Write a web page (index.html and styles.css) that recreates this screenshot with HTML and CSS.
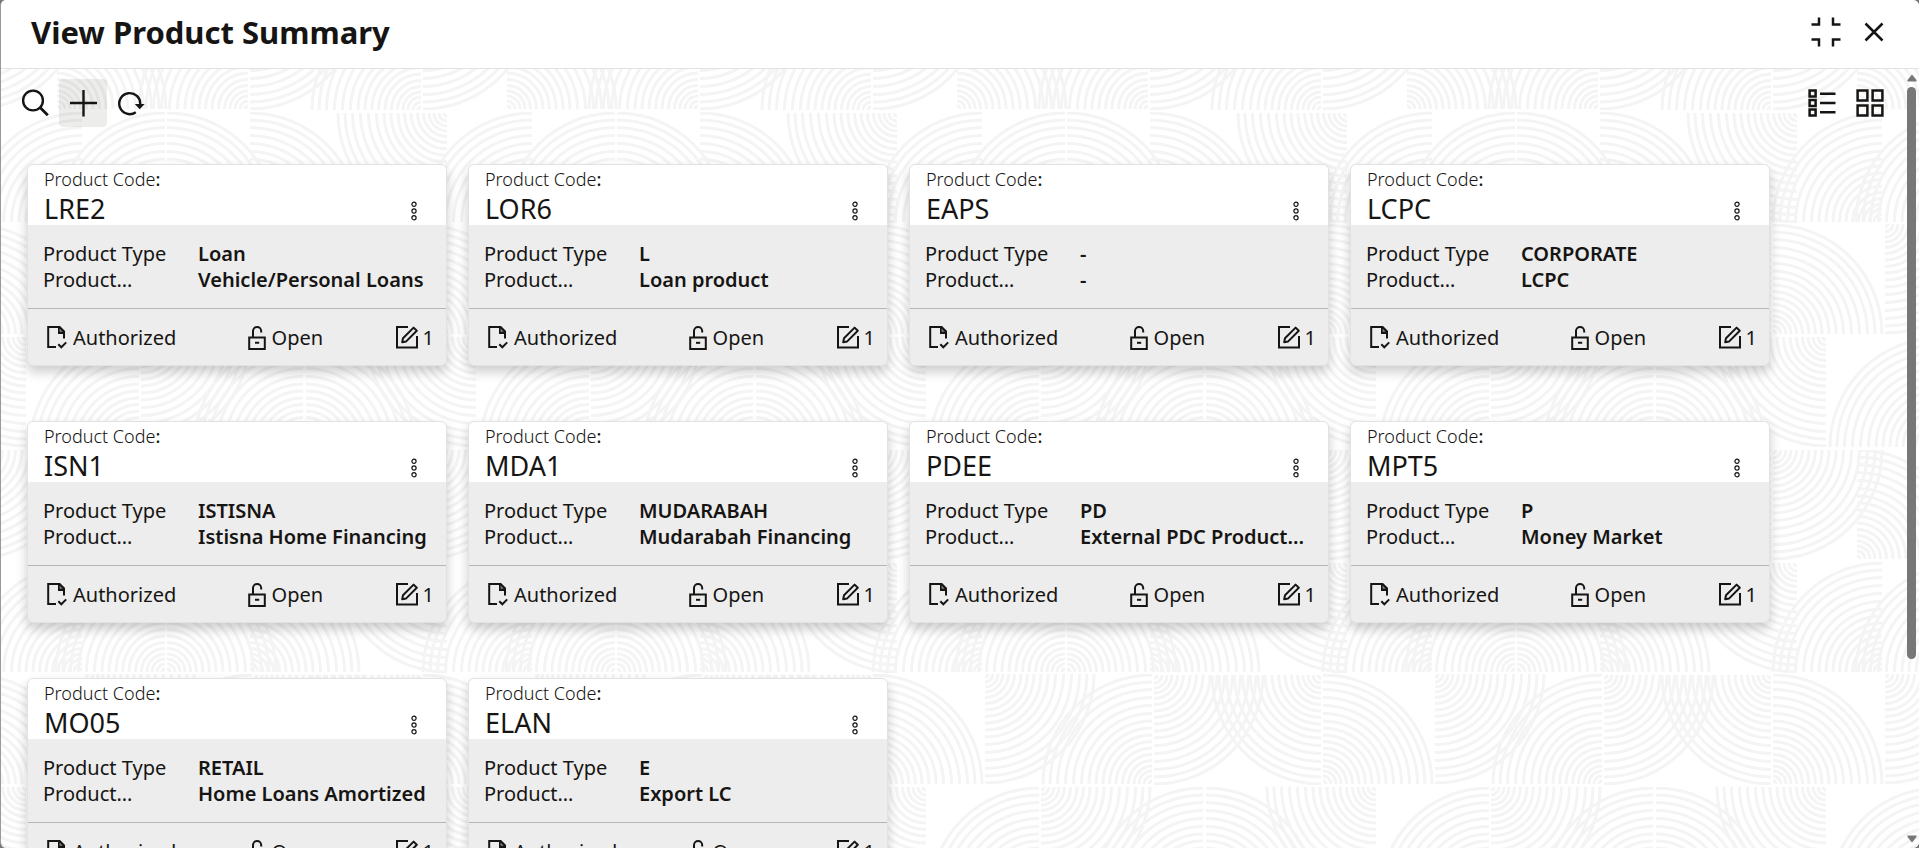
FILE: index.html
```html
<!DOCTYPE html>
<html lang="en">

<head>
<meta charset="utf-8">
<meta name="viewport" content="width=device-width, initial-scale=1">
<title>View Product Summary</title>
<link rel="stylesheet" href="styles.css">
</head>

<body>

<!-- Shared icons -->
<svg class="sprite" aria-hidden="true">
	<symbol id="i-dots" viewBox="0 0 8 20">
		<g fill="none" stroke="currentColor" stroke-width="1.2"><circle cx="4" cy="3.3" r="2.1"/><circle cx="4" cy="10" r="2.1"/><circle cx="4" cy="16.7" r="2.1"/></g>
	</symbol>
	<symbol id="i-auth" viewBox="0 0 20 24">
		<path d="M9 22H1.2V2H12l5 5v6.5" fill="none" stroke="currentColor" stroke-width="2"/>
		<path d="M11 1h2l5 5v3h-7z" fill="currentColor"/>
		<path d="M12.6 6.8V3.6l3 3.2z" fill="#888"/>
		<path d="M11.3 19.3l3 3L19.2 17.4" fill="none" stroke="currentColor" stroke-width="2"/>
	</symbol>
	<symbol id="i-open" viewBox="0 0 18 25">
		<path d="M1.2 12.5h15.6V24H1.2zM5 12.5V6a4.1 4.1 0 0 1 8.2 0v1.5" fill="none" stroke="currentColor" stroke-width="2"/>
		<path d="M7 17.8h4.2" stroke="currentColor" stroke-width="2"/>
	</symbol>
	<symbol id="i-edit" viewBox="0 0 24 24">
		<path d="M13 2H2v20.500h20V11" fill="none" stroke="currentColor" stroke-width="2"/>
		<path d="M7.200 17.200l.8-4L18.600 2.600l3.200 3.200L11.200 16.400z" fill="none" stroke="currentColor" stroke-width="2" stroke-linejoin="round"/>
	</symbol>
</svg>

<div class="window">

	<header class="titlebar">
		<h1>View Product Summary</h1>
		<div class="tools">
			<button type="button" class="tool" aria-label="Collapse">
				<svg width="30" height="30" viewBox="0 0 30 30"><path d="M0.500 7.500H8V0.500M29.500 7.500H22V0.500M0.500 22.500H8V29.500M29.500 22.500H22V29.500" fill="none" stroke="currentColor" stroke-width="2.500"/></svg>
			</button>
			<button type="button" class="tool" aria-label="Close">
				<svg width="20" height="20" viewBox="0 0 20 20"><path d="M1.500 1.500l17 17M18.500 1.500l-17 17" stroke="currentColor" stroke-width="2.500"/></svg>
			</button>
		</div>
	</header>

	<div class="body">
		<main class="content">

			<div class="toolbar">
				<div class="tools">
					<button type="button" class="tool" aria-label="Search">
						<svg width="28" height="28" viewBox="0 0 28 28"><g fill="none" stroke="currentColor" stroke-width="2.400"><circle cx="12" cy="11.500" r="9.900"/><path d="M18.800 18.300l8 8" stroke-width="2.800"/></g></svg>
					</button>
					<button type="button" class="tool active" aria-label="Add">
						<svg width="28" height="28" viewBox="0 0 28 28"><path d="M14.500 1v26.500M1 14h27" stroke="currentColor" stroke-width="2.400"/></svg>
					</button>
					<button type="button" class="tool" aria-label="Refresh">
						<svg width="28" height="28" viewBox="0 0 28 28"><path d="M18.800 23.200A10.500 10.500 0 1 1 23.200 15.500" fill="none" stroke="currentColor" stroke-width="2.400"/><path d="M17.800 15h9.800l-4.900 5.200z" fill="currentColor"/></svg>
					</button>
				</div>
				<div class="tools">
					<button type="button" class="tool" aria-label="List view">
						<svg width="28" height="28" viewBox="0 0 28 28"><path d="M1.600 1.600h6v6h-6zM1.600 11h6v6h-6zM1.600 20.400h6v6h-6z" fill="none" stroke="currentColor" stroke-width="2.500"/><path d="M12 4.800h15.500M12 14h15.500M12 23.300h15.500" stroke="currentColor" stroke-width="2.500"/></svg>
					</button>
					<button type="button" class="tool" aria-label="Tile view">
						<svg width="28" height="28" viewBox="0 0 28 28"><path d="M1.600 1.600h9.800v9.800H1.600zM16.600 1.600h9.800v9.800h-9.800zM1.600 16.600h9.800v9.800H1.600zM16.600 16.600h9.800v9.800h-9.800z" fill="none" stroke="currentColor" stroke-width="2.500"/></svg>
					</button>
				</div>
			</div>

			<div class="cards">

				<article class="card">
					<div class="card-head">
						<p class="label">Product Code<b>:</b></p>
						<h2>LRE2</h2>
						<button type="button" class="more" aria-label="More options"><svg width="8" height="20"><use href="#i-dots"/></svg></button>
					</div>
					<dl class="card-body">
						<dt>Product Type</dt><dd>Loan</dd>
						<dt>Product…</dt><dd>Vehicle/Personal Loans</dd>
					</dl>
					<div class="card-foot">
						<span><svg width="20" height="24"><use href="#i-auth"/></svg>Authorized</span>
						<span><svg width="18" height="25"><use href="#i-open"/></svg>Open</span>
						<span class="edits"><svg width="24" height="24"><use href="#i-edit"/></svg>1</span>
					</div>
				</article>

				<article class="card">
					<div class="card-head">
						<p class="label">Product Code<b>:</b></p>
						<h2>LOR6</h2>
						<button type="button" class="more" aria-label="More options"><svg width="8" height="20"><use href="#i-dots"/></svg></button>
					</div>
					<dl class="card-body">
						<dt>Product Type</dt><dd>L</dd>
						<dt>Product…</dt><dd>Loan product</dd>
					</dl>
					<div class="card-foot">
						<span><svg width="20" height="24"><use href="#i-auth"/></svg>Authorized</span>
						<span><svg width="18" height="25"><use href="#i-open"/></svg>Open</span>
						<span class="edits"><svg width="24" height="24"><use href="#i-edit"/></svg>1</span>
					</div>
				</article>

				<article class="card">
					<div class="card-head">
						<p class="label">Product Code<b>:</b></p>
						<h2>EAPS</h2>
						<button type="button" class="more" aria-label="More options"><svg width="8" height="20"><use href="#i-dots"/></svg></button>
					</div>
					<dl class="card-body">
						<dt>Product Type</dt><dd>-</dd>
						<dt>Product…</dt><dd>-</dd>
					</dl>
					<div class="card-foot">
						<span><svg width="20" height="24"><use href="#i-auth"/></svg>Authorized</span>
						<span><svg width="18" height="25"><use href="#i-open"/></svg>Open</span>
						<span class="edits"><svg width="24" height="24"><use href="#i-edit"/></svg>1</span>
					</div>
				</article>

				<article class="card">
					<div class="card-head">
						<p class="label">Product Code<b>:</b></p>
						<h2>LCPC</h2>
						<button type="button" class="more" aria-label="More options"><svg width="8" height="20"><use href="#i-dots"/></svg></button>
					</div>
					<dl class="card-body">
						<dt>Product Type</dt><dd>CORPORATE</dd>
						<dt>Product…</dt><dd>LCPC</dd>
					</dl>
					<div class="card-foot">
						<span><svg width="20" height="24"><use href="#i-auth"/></svg>Authorized</span>
						<span><svg width="18" height="25"><use href="#i-open"/></svg>Open</span>
						<span class="edits"><svg width="24" height="24"><use href="#i-edit"/></svg>1</span>
					</div>
				</article>

				<article class="card">
					<div class="card-head">
						<p class="label">Product Code<b>:</b></p>
						<h2>ISN1</h2>
						<button type="button" class="more" aria-label="More options"><svg width="8" height="20"><use href="#i-dots"/></svg></button>
					</div>
					<dl class="card-body">
						<dt>Product Type</dt><dd>ISTISNA</dd>
						<dt>Product…</dt><dd>Istisna Home Financing</dd>
					</dl>
					<div class="card-foot">
						<span><svg width="20" height="24"><use href="#i-auth"/></svg>Authorized</span>
						<span><svg width="18" height="25"><use href="#i-open"/></svg>Open</span>
						<span class="edits"><svg width="24" height="24"><use href="#i-edit"/></svg>1</span>
					</div>
				</article>

				<article class="card">
					<div class="card-head">
						<p class="label">Product Code<b>:</b></p>
						<h2>MDA1</h2>
						<button type="button" class="more" aria-label="More options"><svg width="8" height="20"><use href="#i-dots"/></svg></button>
					</div>
					<dl class="card-body">
						<dt>Product Type</dt><dd>MUDARABAH</dd>
						<dt>Product…</dt><dd>Mudarabah Financing</dd>
					</dl>
					<div class="card-foot">
						<span><svg width="20" height="24"><use href="#i-auth"/></svg>Authorized</span>
						<span><svg width="18" height="25"><use href="#i-open"/></svg>Open</span>
						<span class="edits"><svg width="24" height="24"><use href="#i-edit"/></svg>1</span>
					</div>
				</article>

				<article class="card">
					<div class="card-head">
						<p class="label">Product Code<b>:</b></p>
						<h2>PDEE</h2>
						<button type="button" class="more" aria-label="More options"><svg width="8" height="20"><use href="#i-dots"/></svg></button>
					</div>
					<dl class="card-body">
						<dt>Product Type</dt><dd>PD</dd>
						<dt>Product…</dt><dd>External PDC Product…</dd>
					</dl>
					<div class="card-foot">
						<span><svg width="20" height="24"><use href="#i-auth"/></svg>Authorized</span>
						<span><svg width="18" height="25"><use href="#i-open"/></svg>Open</span>
						<span class="edits"><svg width="24" height="24"><use href="#i-edit"/></svg>1</span>
					</div>
				</article>

				<article class="card">
					<div class="card-head">
						<p class="label">Product Code<b>:</b></p>
						<h2>MPT5</h2>
						<button type="button" class="more" aria-label="More options"><svg width="8" height="20"><use href="#i-dots"/></svg></button>
					</div>
					<dl class="card-body">
						<dt>Product Type</dt><dd>P</dd>
						<dt>Product…</dt><dd>Money Market</dd>
					</dl>
					<div class="card-foot">
						<span><svg width="20" height="24"><use href="#i-auth"/></svg>Authorized</span>
						<span><svg width="18" height="25"><use href="#i-open"/></svg>Open</span>
						<span class="edits"><svg width="24" height="24"><use href="#i-edit"/></svg>1</span>
					</div>
				</article>

				<article class="card">
					<div class="card-head">
						<p class="label">Product Code<b>:</b></p>
						<h2>MO05</h2>
						<button type="button" class="more" aria-label="More options"><svg width="8" height="20"><use href="#i-dots"/></svg></button>
					</div>
					<dl class="card-body">
						<dt>Product Type</dt><dd>RETAIL</dd>
						<dt>Product…</dt><dd>Home Loans Amortized</dd>
					</dl>
					<div class="card-foot">
						<span><svg width="20" height="24"><use href="#i-auth"/></svg>Authorized</span>
						<span><svg width="18" height="25"><use href="#i-open"/></svg>Open</span>
						<span class="edits"><svg width="24" height="24"><use href="#i-edit"/></svg>1</span>
					</div>
				</article>

				<article class="card">
					<div class="card-head">
						<p class="label">Product Code<b>:</b></p>
						<h2>ELAN</h2>
						<button type="button" class="more" aria-label="More options"><svg width="8" height="20"><use href="#i-dots"/></svg></button>
					</div>
					<dl class="card-body">
						<dt>Product Type</dt><dd>E</dd>
						<dt>Product…</dt><dd>Export LC</dd>
					</dl>
					<div class="card-foot">
						<span><svg width="20" height="24"><use href="#i-auth"/></svg>Authorized</span>
						<span><svg width="18" height="25"><use href="#i-open"/></svg>Open</span>
						<span class="edits"><svg width="24" height="24"><use href="#i-edit"/></svg>1</span>
					</div>
				</article>

			</div>
		</main>

		<div class="scrollbar" aria-hidden="true">
			<svg width="10" height="8" viewBox="0 0 10 8"><path d="M5 0.500L9.500 6v1.500h-9V6z"/></svg>
			<div class="track"><div class="thumb"></div></div>
			<svg width="10" height="8" viewBox="0 0 10 8"><path d="M5 7.500L9.500 2V0.500h-9V2z"/></svg>
		</div>
	</div>

</div>

</body>

</html>
```
FILE: styles.css
```css
* {
	box-sizing: border-box;
}

body {
	margin: 0;
	background: #777;
	color: #161513;
	font-family: "Noto Sans", "Open Sans", sans-serif;
	font-size: 20px;
}

button {
	padding: 0;
	border: 0;
	background: none;
	color: inherit;
	font: inherit;
	cursor: pointer;
}

svg {
	display: block;
	flex: none;
}

.sprite {
	display: none;
}

/* the wave texture is one 450px tile made of quarter rings */
.window {
	display: flex;
	flex-direction: column;
	height: 100vh;
	overflow: hidden;
	border-left: 1px solid #999;
	border-radius: 6px;
	background-color: #fff;
	background-position: -1px 0;
	background-image: url("data:image/svg+xml,%3Csvg xmlns='http://www.w3.org/2000/svg' width='450' height='450'%3E%3Cdefs%3E%3CclipPath id='c'%3E%3Crect width='111' height='110'/%3E%3C/clipPath%3E%3Cg id='q' clip-path='url(%23c)' fill='none' stroke='%23f4f4f4' stroke-width='3'%3E%3Ccircle r='3'/%3E%3Ccircle r='8'/%3E%3Ccircle r='13'/%3E%3Ccircle r='18'/%3E%3Ccircle r='23.500'/%3E%3Ccircle r='29.500'/%3E%3Ccircle r='36'/%3E%3Ccircle r='42.500'/%3E%3Ccircle r='49'/%3E%3Ccircle r='56'/%3E%3Ccircle r='63'/%3E%3Ccircle r='70.500'/%3E%3Ccircle r='78.500'/%3E%3Ccircle r='86.500'/%3E%3Ccircle r='94.500'/%3E%3Ccircle r='102'/%3E%3Ccircle r='109'/%3E%3C/g%3E%3Cg id='t'%3E%3Cuse href='%23q' transform='translate(57 109) scale(1 -1)'/%3E%3Cuse href='%23q' transform='translate(248 109) scale(-1 -1)'/%3E%3Cuse href='%23q' transform='translate(250 0)'/%3E%3Cuse href='%23q' transform='translate(421 110) scale(-1 -1)'/%3E%3Cuse href='%23q' transform='translate(423 0)'/%3E%3Cuse href='%23q' transform='translate(82 222) scale(-1 -1)'/%3E%3Cuse href='%23q' transform='translate(165 222) scale(-1 -1)'/%3E%3Cuse href='%23q' transform='translate(167 222) scale(1 -1)'/%3E%3Cuse href='%23q' transform='translate(250 222) scale(1 -1)'/%3E%3Cuse href='%23q' transform='translate(447 113) scale(-1 1)'/%3E%3Cuse href='%23q' transform='translate(423 334) scale(1 -1)'/%3E%3Cuse href='%23q' transform='translate(85 224)'/%3E%3Cuse href='%23q' transform='translate(252 334) scale(-1 -1)'/%3E%3Cuse href='%23q' transform='translate(254 225)'/%3E%3Cuse href='%23q' transform='translate(421 225) scale(-1 1)'/%3E%3Cuse href='%23q' transform='translate(476 337) scale(-1 1)'/%3E%3Cuse href='%23q' transform='translate(139 447) scale(-1 -1)'/%3E%3Cuse href='%23q' transform='translate(141 337)'/%3E%3Cuse href='%23q' transform='translate(303 447) scale(-1 -1)'/%3E%3Cuse href='%23q' transform='translate(306 447) scale(1 -1)'/%3E%3C/g%3E%3C/defs%3E%3Cuse href='%23t'/%3E%3Cuse href='%23t' x='-450'/%3E%3Cuse href='%23t' x='450'/%3E%3C/svg%3E");
}

/* Title bar */

.titlebar {
	display: flex;
	flex: none;
	align-items: center;
	justify-content: space-between;
	height: 69px;
	padding: 0 21px 4px 30px;
	border-bottom: 1px solid #e2e2e2;
	background: #fff;
}

.titlebar h1 {
	margin: 0;
	font-size: 31px;
	line-height: 44px;
	font-weight: 700;
}

.tools {
	display: flex;
}

.tool {
	display: flex;
	align-items: center;
	justify-content: center;
	width: 48px;
	height: 48px;
	border-radius: 4px;
}

.tool.active {
	background: rgba(22, 21, 19, 0.08);
}

/* Page body */

.body {
	display: flex;
	flex: 1;
	min-height: 0;
}

.content {
	flex: 1;
	min-width: 0;
	overflow: hidden;
}

.toolbar {
	display: flex;
	justify-content: space-between;
	padding: 10px 10px 0;
}

.cards {
	display: grid;
	grid-template-columns: repeat(auto-fill, 420px);
	gap: 55px 21px;
	padding: 37px 26px;
}

.card {
	border: 1px solid #e2e2e2;
	border-radius: 6px;
	background: #ededed;
	box-shadow: 0 6px 12px rgba(0, 0, 0, 0.2);
	overflow: hidden;
}

.card-head {
	display: grid;
	grid-template-columns: 1fr auto;
	align-items: center;
	height: 60px;
	padding: 0 20px 0 16px;
	background: #fff;
}

.label {
	grid-column: 1 / 3;
	margin: 0;
	font-size: 18px;
	line-height: 28px;
	font-weight: 300;
}

.label b {
	font-weight: 500;
}

.card h2 {
	margin: 0;
	font-size: 27px;
	line-height: 32px;
	font-weight: 400;
}

.more {
	display: flex;
	align-items: flex-end;
	justify-content: center;
	width: 24px;
	height: 24px;
}

.card-body {
	display: grid;
	grid-template-columns: 140px 1fr;
	column-gap: 15px;
	margin: 0;
	padding: 16px 8px 15px 15px;
	border-bottom: 1px solid #b5b5b5;
	line-height: 26px;
}

.card-body dd {
	margin: 0;
	font-weight: 600;
	white-space: nowrap;
}

.card-foot {
	display: flex;
	align-items: center;
	justify-content: space-between;
	height: 56px;
	padding: 0 12px 0 19px;
}

.card-foot span {
	display: flex;
	align-items: center;
	gap: 6px;
}

.card-foot .edits {
	gap: 4px;
}

/* Scrollbar */

.scrollbar {
	display: flex;
	flex: none;
	flex-direction: column;
	align-items: center;
	gap: 5px;
	width: 15px;
	padding: 5px 0;
	fill: #777;
}

.track {
	flex: 1;
	width: 9px;
}

.thumb {
	height: 77%;
	border-radius: 5px;
	background: #777;
}
```
